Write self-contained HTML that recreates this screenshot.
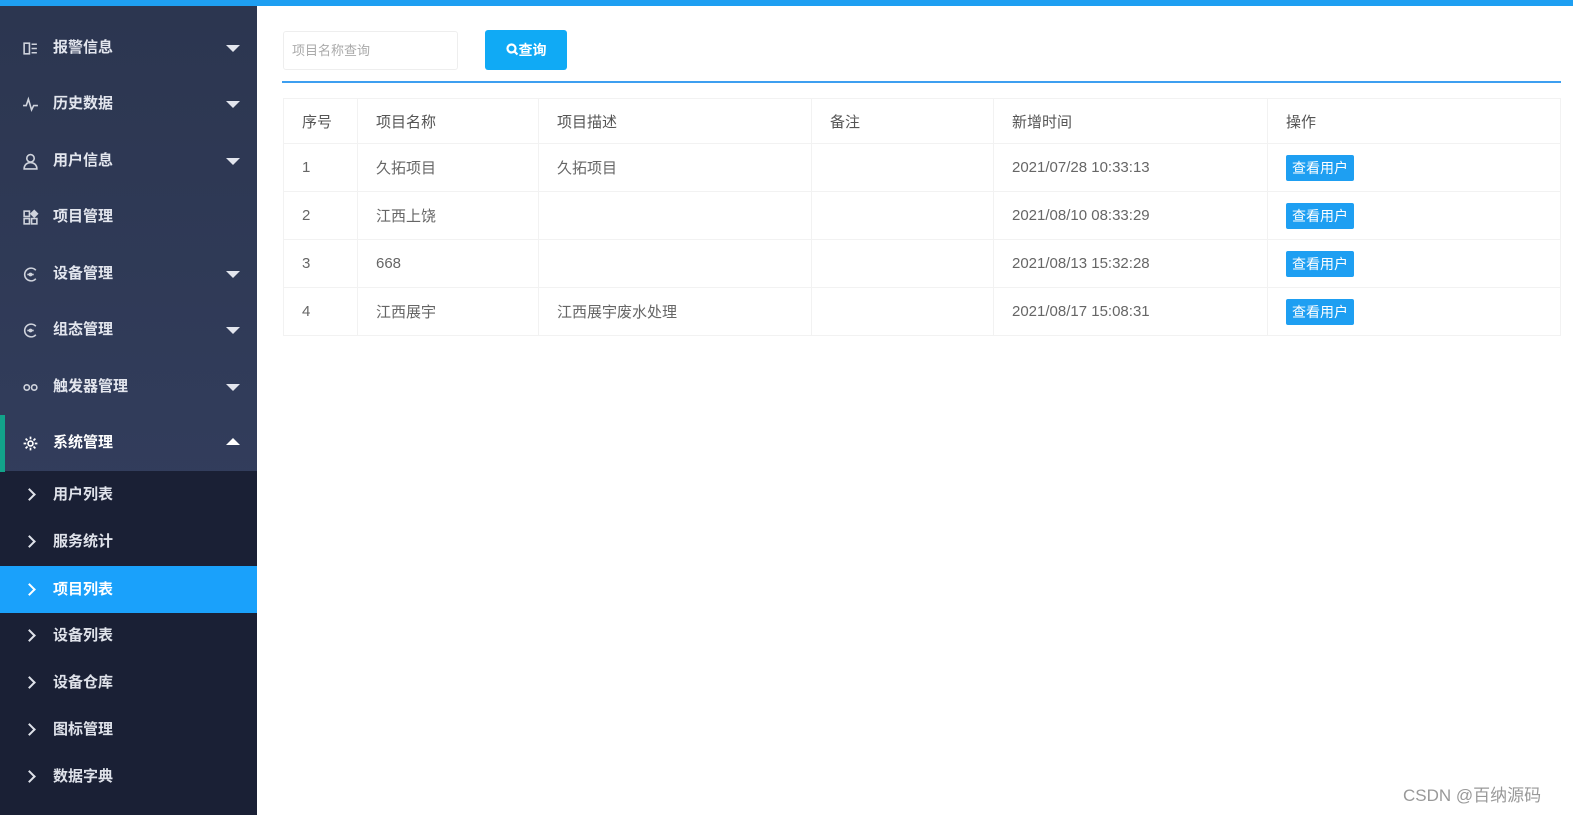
<!DOCTYPE html>
<html><head><meta charset="utf-8"><style>
*{margin:0;padding:0;box-sizing:border-box}
body{width:1573px;height:815px;overflow:hidden;background:#fff;font-family:"Liberation Sans","Noto Sans CJK SC",sans-serif;position:relative}
.top{position:absolute;left:0;top:0;width:1573px;height:6px;background:#1e9ff2}
.side{position:absolute;left:0;top:6px;width:257px;height:809px;background:linear-gradient(#2c3650,#323d5c 60%,#2f3a57)}
.m{position:absolute;left:0;width:257px;height:56px;color:#e3e6ee;font-size:15px;font-weight:bold;line-height:56px}
.m .ic{position:absolute;left:22px;top:20px;width:17px;height:17px}
.m .t{position:absolute;left:53px}
.m .ar{position:absolute;left:226px;top:25px;width:0;height:0;border-left:7px solid transparent;border-right:7px solid transparent;border-top:7px solid #e3e6ee}
.m .up{border-top:none;border-bottom:7px solid #fff;top:23px}
.sub{position:absolute;left:0;top:471px;width:257px;height:344px;background:#1a2035}
.s{position:absolute;left:0;width:257px;height:47px;line-height:47px;color:#dfe2ea;font-size:15px;font-weight:bold}
.s .t{position:absolute;left:53px}
.s .c{position:absolute;left:25px;top:19px;width:9px;height:9px;border-top:2px solid #dfe2ea;border-right:2px solid #dfe2ea;transform:rotate(45deg)}
.s.act{background:#1aa1fb;color:#fff}
.s.act .c{border-color:#fff}
.inp{position:absolute;left:283px;top:31px;width:175px;height:39px;border:1px solid #eee;border-radius:3px;font-size:13px;color:#aaa;line-height:37px;padding-left:8px}
.btn{position:absolute;left:485px;top:30px;width:82px;height:40px;background:#10aaf5;border-radius:3px;color:#fff;font-size:14px;font-weight:bold;line-height:40px;text-align:center}
.line{position:absolute;left:282px;top:81px;width:1279px;height:2px;background:#3d9ff0}
table{position:absolute;left:283px;top:98px;width:1278px;border-collapse:collapse;font-size:15px;color:#666}
td{border:1px solid #f2f2f2;padding-left:18px;height:48px}
tr:first-child td{height:45px;color:#555}
.b{display:inline-block;background:#1e9ff2;color:#fff;font-size:14px;padding:0 6px;height:26px;line-height:26px;border-radius:2px}
.wm{position:absolute;left:1403px;top:781px;font-size:17px;color:#999}
</style></head><body>
<div class="top"></div>
<div class="side">
<div class="sub" style="top:465px"></div>
</div>
<div class="m" style="top:20px"><svg class="ic" viewBox="0 0 16 16" fill="none" stroke="#cfd3dc" stroke-width="1.5"><rect x="2" y="3" width="5" height="10"/><path d="M9 4h5M9 8h5M9 12h5"/></svg><span class="t">报警信息</span><span class="ar"></span></div>
<div class="m" style="top:76px"><svg class="ic" viewBox="0 0 16 16" fill="none" stroke="#cfd3dc" stroke-width="1.5"><path d="M1 9h3l2-6 3 10 2-4h4"/></svg><span class="t">历史数据</span><span class="ar"></span></div>
<div class="m" style="top:133px"><svg class="ic" viewBox="0 0 16 16" fill="none" stroke="#cfd3dc" stroke-width="1.5"><circle cx="8" cy="5" r="3.5"/><path d="M2 15c0-4 3-6 6-6s6 2 6 6z"/></svg><span class="t">用户信息</span><span class="ar"></span></div>
<div class="m" style="top:189px"><svg class="ic" viewBox="0 0 16 16" fill="none" stroke="#cfd3dc" stroke-width="1.5"><rect x="2" y="2" width="5" height="5"/><rect x="2" y="9" width="5" height="5"/><rect x="9" y="9" width="5" height="5"/><path d="M11.5 1.5l3 3-3 3-3-3z" fill="#cfd3dc"/></svg><span class="t">项目管理</span></div>
<div class="m" style="top:246px"><svg class="ic" viewBox="0 0 16 16" fill="none" stroke="#cfd3dc" stroke-width="1.5"><path d="M13 4A6 6 0 1 0 13 12"/><path d="M5 8h6"/><circle cx="8" cy="8" r="1" fill="#cfd3dc"/></svg><span class="t">设备管理</span><span class="ar"></span></div>
<div class="m" style="top:302px"><svg class="ic" viewBox="0 0 16 16" fill="none" stroke="#cfd3dc" stroke-width="1.5"><path d="M13 4A6 6 0 1 0 13 12"/><path d="M5 8h6"/><circle cx="8" cy="8" r="1" fill="#cfd3dc"/></svg><span class="t">组态管理</span><span class="ar"></span></div>
<div class="m" style="top:359px"><svg class="ic" viewBox="0 0 16 16" fill="none" stroke="#cfd3dc" stroke-width="1.5"><circle cx="4.5" cy="8" r="2.5"/><circle cx="11.5" cy="8" r="2.5"/></svg><span class="t">触发器管理</span><span class="ar"></span></div>
<div class="m" style="top:415px;height:57px;border-left:5px solid #12a38a"><svg class="ic" style="left:17px" viewBox="0 0 16 16" fill="none" stroke="#fff" stroke-width="1.6"><circle cx="8" cy="8" r="2.3"/><path d="M8 1.5v2.5M8 12v2.5M1.5 8H4M12 8h2.5M3.4 3.4l1.8 1.8M10.8 10.8l1.8 1.8M3.4 12.6l1.8-1.8M10.8 5.2l1.8-1.8"/></svg><span class="t" style="left:48px;color:#fff">系统管理</span><span class="ar up" style="left:221px"></span></div>
<div class="s" style="top:471px"><span class="c"></span><span class="t">用户列表</span></div>
<div class="s" style="top:518px"><span class="c"></span><span class="t">服务统计</span></div>
<div class="s act" style="top:566px"><span class="c"></span><span class="t">项目列表</span></div>
<div class="s" style="top:612px"><span class="c"></span><span class="t">设备列表</span></div>
<div class="s" style="top:659px"><span class="c"></span><span class="t">设备仓库</span></div>
<div class="s" style="top:706px"><span class="c"></span><span class="t">图标管理</span></div>
<div class="s" style="top:753px"><span class="c"></span><span class="t">数据字典</span></div>
<div class="inp">项目名称查询</div>
<div class="btn"><svg width="13" height="13" viewBox="0 0 13 13" style="vertical-align:-1px" fill="none" stroke="#fff" stroke-width="2.2"><circle cx="5.5" cy="5.5" r="4"/><path d="M8.5 8.5l3 3"/></svg>查询</div>
<div class="line"></div>
<table>
<colgroup><col style="width:74px"><col style="width:181px"><col style="width:273px"><col style="width:182px"><col style="width:274px"><col></colgroup>
<tr><td>序号</td><td>项目名称</td><td>项目描述</td><td>备注</td><td>新增时间</td><td>操作</td></tr>
<tr><td>1</td><td>久拓项目</td><td>久拓项目</td><td></td><td>2021/07/28 10:33:13</td><td><span class="b">查看用户</span></td></tr>
<tr><td>2</td><td>江西上饶</td><td></td><td></td><td>2021/08/10 08:33:29</td><td><span class="b">查看用户</span></td></tr>
<tr><td>3</td><td>668</td><td></td><td></td><td>2021/08/13 15:32:28</td><td><span class="b">查看用户</span></td></tr>
<tr><td>4</td><td>江西展宇</td><td>江西展宇废水处理</td><td></td><td>2021/08/17 15:08:31</td><td><span class="b">查看用户</span></td></tr>
</table>
<div class="wm">CSDN @百纳源码</div>
</body></html>
